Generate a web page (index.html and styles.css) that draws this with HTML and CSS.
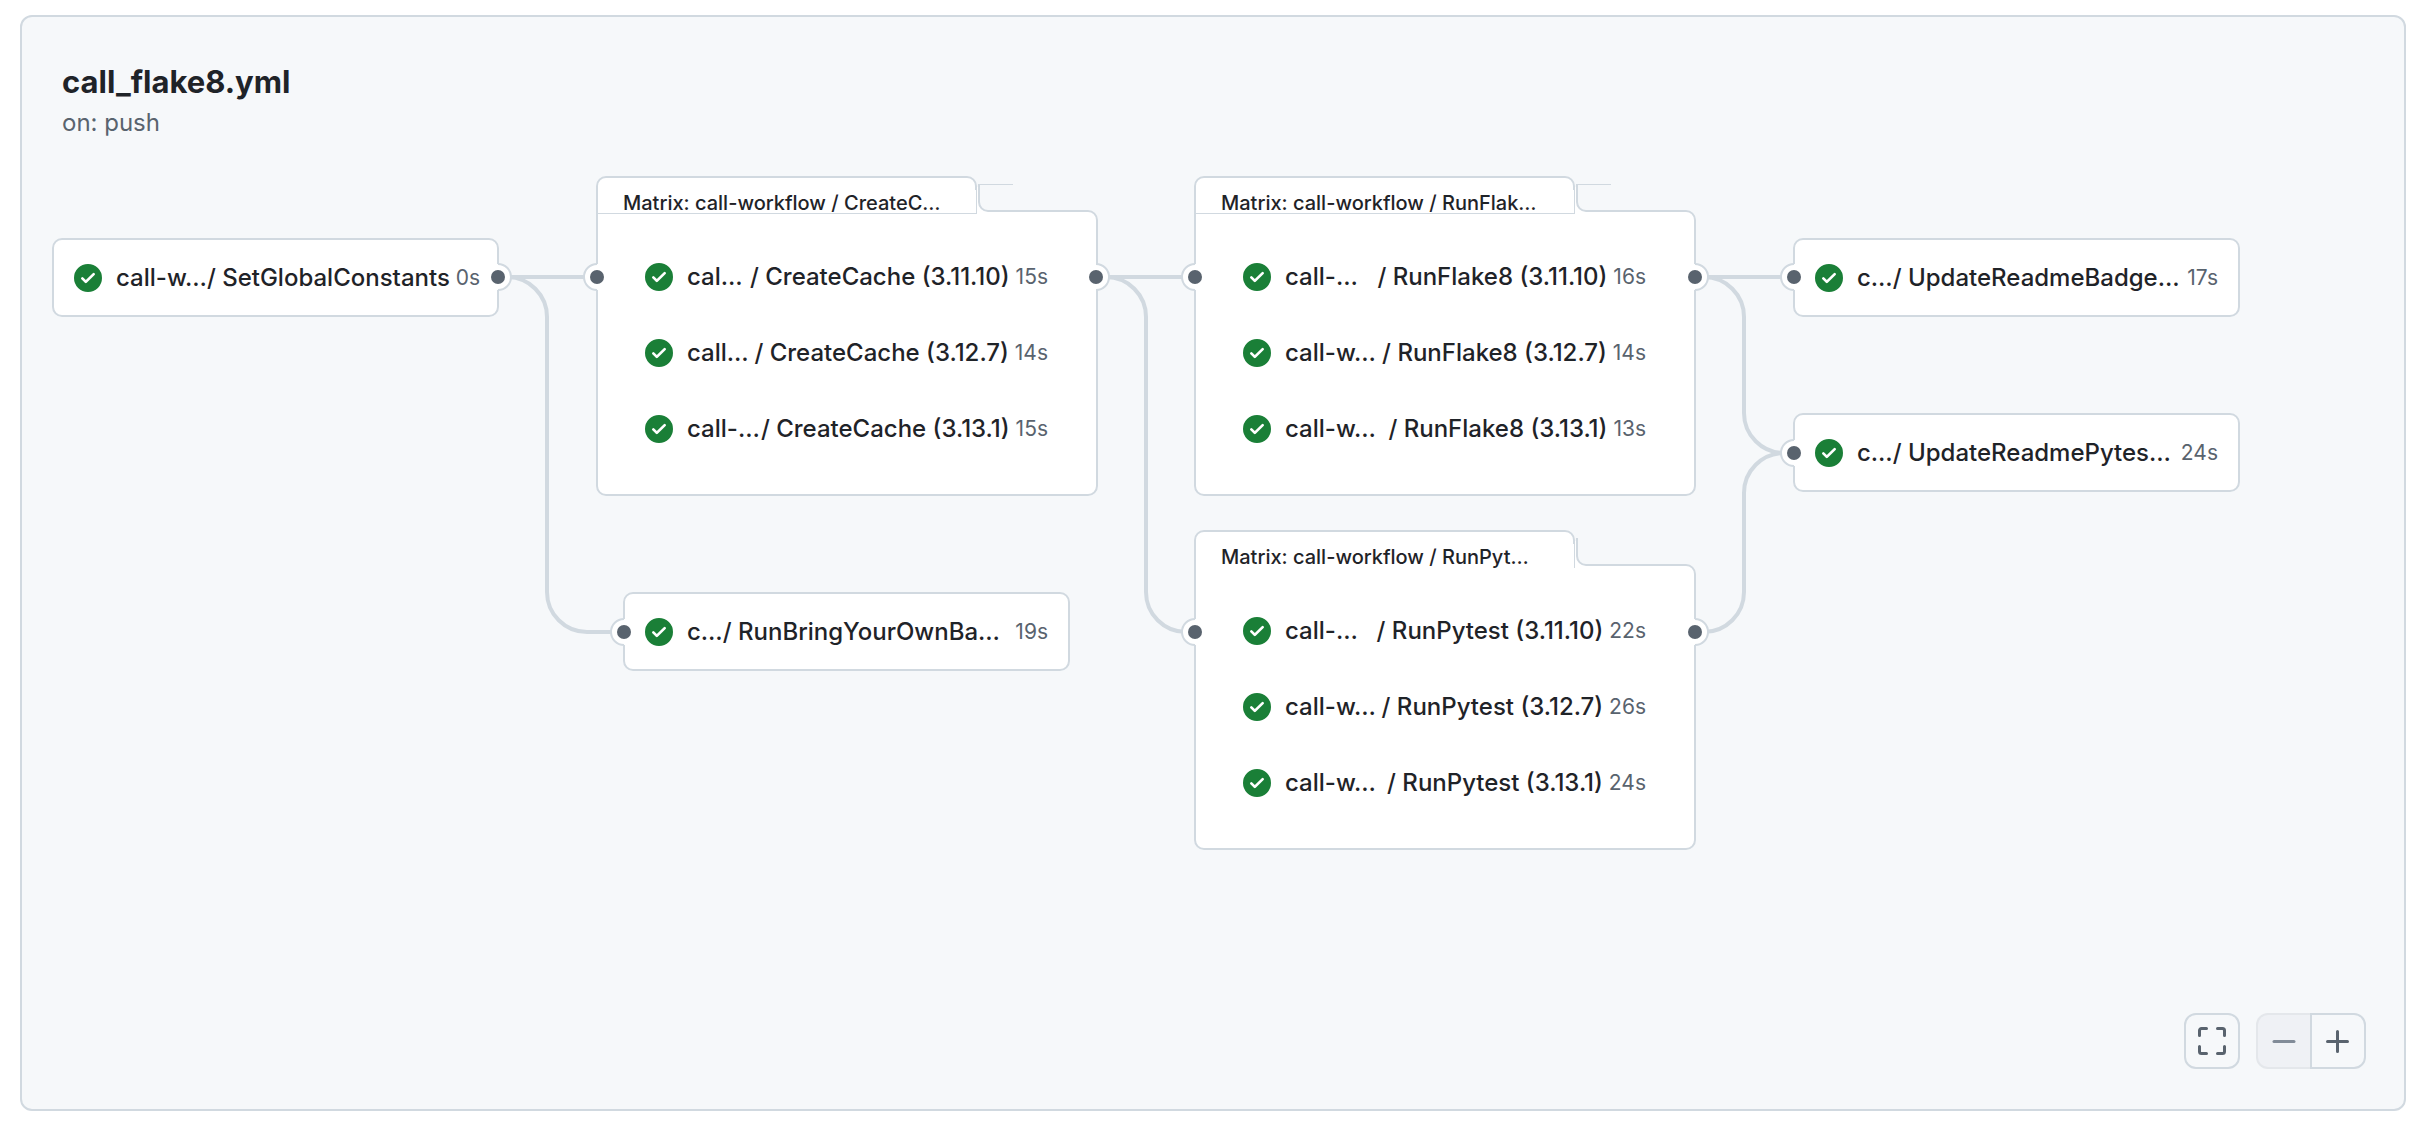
FILE: index.html
```html
<!DOCTYPE html>
<html lang="en">
<head>
<meta charset="utf-8">
<title>call_flake8.yml</title>
<link rel="stylesheet" href="styles.css">
</head>
<body>
<svg class="defs" aria-hidden="true">
  <symbol id="check" viewBox="0 0 16 16"><path d="M8 16A8 8 0 1 1 8 0a8 8 0 0 1 0 16Zm3.78-9.72a.751.751 0 0 0-.018-1.042.751.751 0 0 0-1.042-.018L6.75 9.19 5.28 7.72a.751.751 0 0 0-1.042.018.751.751 0 0 0-.018 1.042l2 2a.75.75 0 0 0 1.06 0Z"/></symbol>
  <symbol id="folder" viewBox="0 0 502 320">
    <path class="fill" d="M1 310V10a9 9 0 0 1 9-9H371a9 9 0 0 1 9 9L383 12V26a9 9 0 0 0 9 9H492a9 9 0 0 1 9 9V310a9 9 0 0 1-9 9H10a9 9 0 0 1-9-9Z"/>
    <path class="edge" d="M383 8V26a9 9 0 0 0 9 9H492a9 9 0 0 1 9 9V310a9 9 0 0 1-9 9H10a9 9 0 0 1-9-9V10a9 9 0 0 1 9-9H371a9 9 0 0 1 9 9V14"/>
    <path class="hair" d="M380.500 14V38"/>
  </symbol>
  <g id="port-out"><circle class="socket" r="13"/><path class="edge" d="M0-13A13 13 0 0 1 0 13"/><circle class="dot" r="7"/></g>
  <g id="port-in"><circle class="socket" r="13"/><path class="edge" d="M0-13A13 13 0 0 0 0 13"/><circle class="dot" r="7"/></g>
</svg>

<main class="panel">
  <header class="head">
    <h1 class="title">call_flake8.yml</h1>
    <p class="trigger">on: push</p>
  </header>

  <section class="canvas" aria-label="Workflow graph">
    <svg class="layer" aria-hidden="true">
      <g class="links">
        <path d="M476 138H574"/>
        <path d="M476 138H485a40 40 0 0 1 40 40V453a40 40 0 0 0 40 40H601"/>
        <path d="M1074 138H1172"/>
        <path d="M1074 138H1084a40 40 0 0 1 40 40V453a40 40 0 0 0 40 40H1172"/>
        <path d="M1673 138H1771"/>
        <path d="M1673 138H1682a40 40 0 0 1 40 40V274a40 40 0 0 0 40 40H1771"/>
        <path d="M1673 493H1682a40 40 0 0 0 40-40V354a40 40 0 0 1 40-40H1771"/>
      </g>
    </svg>

    <a class="job card n-constants" href="#"><svg class="ok"><use href="#check"/></svg><span class="name"><span class="caller">call-w…</span><span>/ SetGlobalConstants</span></span><span class="time">0s</span></a>

    <article class="matrix n-cache">
      <svg class="outline"><use href="#folder"/><path class="hair" d="M2 37.500H380M384 8.500H417"/></svg>
      <h2 class="tab">Matrix: call-workflow / CreateC…</h2>
      <div class="jobs">
        <a class="job" href="#"><svg class="ok"><use href="#check"/></svg><span class="name"><span class="caller">cal…</span><span>/ CreateCache (3.11.10)</span></span><span class="time">15s</span></a>
        <a class="job" href="#"><svg class="ok"><use href="#check"/></svg><span class="name"><span class="caller">call…</span><span>/ CreateCache (3.12.7)</span></span><span class="time">14s</span></a>
        <a class="job" href="#"><svg class="ok"><use href="#check"/></svg><span class="name"><span class="caller">call-…</span><span>/ CreateCache (3.13.1)</span></span><span class="time">15s</span></a>
      </div>
    </article>

    <a class="job card clipped n-badges" href="#"><svg class="ok"><use href="#check"/></svg><span class="name"><span class="caller">c…</span><span>/ RunBringYourOwnBa…</span></span><span class="time">19s</span></a>

    <article class="matrix n-flake">
      <svg class="outline"><use href="#folder"/><path class="hair" d="M2 37.500H380M384 8.500H417"/></svg>
      <h2 class="tab">Matrix: call-workflow / RunFlak…</h2>
      <div class="jobs">
        <a class="job" href="#"><svg class="ok"><use href="#check"/></svg><span class="name"><span class="caller">call-…</span><span>/ RunFlake8 (3.11.10)</span></span><span class="time">16s</span></a>
        <a class="job" href="#"><svg class="ok"><use href="#check"/></svg><span class="name"><span class="caller">call-w…</span><span>/ RunFlake8 (3.12.7)</span></span><span class="time">14s</span></a>
        <a class="job" href="#"><svg class="ok"><use href="#check"/></svg><span class="name"><span class="caller">call-w…</span><span>/ RunFlake8 (3.13.1)</span></span><span class="time">13s</span></a>
      </div>
    </article>

    <article class="matrix n-pytest">
      <svg class="outline"><use href="#folder"/></svg>
      <h2 class="tab">Matrix: call-workflow / RunPyt…</h2>
      <div class="jobs">
        <a class="job" href="#"><svg class="ok"><use href="#check"/></svg><span class="name"><span class="caller">call-…</span><span>/ RunPytest (3.11.10)</span></span><span class="time">22s</span></a>
        <a class="job" href="#"><svg class="ok"><use href="#check"/></svg><span class="name"><span class="caller">call-w…</span><span>/ RunPytest (3.12.7)</span></span><span class="time">26s</span></a>
        <a class="job" href="#"><svg class="ok"><use href="#check"/></svg><span class="name"><span class="caller">call-w…</span><span>/ RunPytest (3.13.1)</span></span><span class="time">24s</span></a>
      </div>
    </article>

    <a class="job card clipped n-readme" href="#"><svg class="ok"><use href="#check"/></svg><span class="name"><span class="caller">c…</span><span>/ UpdateReadmeBadge…</span></span><span class="time">17s</span></a>
    <a class="job card clipped n-readme-pytest" href="#"><svg class="ok"><use href="#check"/></svg><span class="name"><span class="caller">c…</span><span>/ UpdateReadmePytes…</span></span><span class="time">24s</span></a>

    <svg class="layer" aria-hidden="true">
      <use href="#port-out" x="476" y="138"/>
      <use href="#port-in" x="575" y="138"/>
      <use href="#port-out" x="1074" y="138"/>
      <use href="#port-in" x="602" y="493"/>
      <use href="#port-in" x="1173" y="138"/>
      <use href="#port-out" x="1673" y="138"/>
      <use href="#port-in" x="1173" y="493"/>
      <use href="#port-out" x="1673" y="493"/>
      <use href="#port-in" x="1772" y="138"/>
      <use href="#port-in" x="1772" y="314"/>
    </svg>
  </section>

  <footer class="controls">
    <button class="ctl" type="button" aria-label="Full screen"><svg class="glyph" viewBox="0 0 28 28"><path d="M1.500 8.500V3.500a2 2 0 0 1 2-2H8.500M19.500 1.500H24.500a2 2 0 0 1 2 2V8.500M26.500 19.500V24.500a2 2 0 0 1-2 2H19.500M8.500 26.500H3.500a2 2 0 0 1-2-2V19.500"/></svg></button>
    <div class="zoom">
      <button class="ctl" type="button" aria-label="Zoom out" disabled><svg class="glyph" viewBox="0 0 28 28"><path d="M4 14.500H24"/></svg></button>
      <button class="ctl" type="button" aria-label="Zoom in"><svg class="glyph" viewBox="0 0 28 28"><path d="M3.500 14.500H23.500M13.500 4.500V24.500"/></svg></button>
    </div>
  </footer>
</main>
</body>
</html>
```
FILE: styles.css
```css
* { box-sizing: border-box; }

body {
  margin: 0;
  padding: 15px 20px 17px;
  background: #fff;
  color: #1f2328;
  font-family: Inter, "Liberation Sans", sans-serif;
}

.defs { position: absolute; width: 0; height: 0; }

.panel {
  display: flex;
  flex-direction: column;
  min-height: calc(100vh - 32px);
  border: 2px solid #d1d9e0;
  border-radius: 12px;
  background: #f6f8fa;
}

.head { padding: 45px 40px 0; }
.title { margin: 0; font-size: 31px; line-height: 40px; font-weight: 700; }
.trigger { margin: 4px 0 0; font-size: 24px; line-height: 33px; color: #59636e; }

/* Graph */
.canvas { position: relative; flex: 1; min-height: 740px; }
.layer { position: absolute; inset: 0; width: 100%; height: 100%; pointer-events: none; }
.links path { fill: none; stroke: #d1d9e0; stroke-width: 4px; }
.socket, .fill { fill: #fff; }
.edge { fill: none; stroke: #d1d9e0; stroke-width: 2px; }
.hair { fill: none; stroke: #d1d9e0; stroke-width: 1px; }
.dot { fill: #59636e; }

.job {
  display: flex;
  align-items: center;
  height: 76px;
  color: inherit;
  font-size: 24px;
  line-height: 32px;
  font-weight: 500;
  text-decoration: none;
  white-space: pre;
}
.ok { flex: none; width: 28px; height: 28px; margin-right: 14px; fill: #1a7f37; }
.name { display: flex; flex: 1; justify-content: space-between; }
.clipped .name { justify-content: flex-start; }
.time { padding-left: 6px; font-size: 21px; font-weight: 400; color: #59636e; }

.card {
  position: absolute;
  width: 447px;
  height: 79px;
  padding: 0 20px;
  border: 2px solid #d1d9e0;
  border-radius: 10px;
  background: #fff;
}

.matrix { position: absolute; width: 502px; height: 320px; }
.outline { position: absolute; inset: 0; width: 502px; height: 320px; }
.tab {
  position: relative;
  margin: 0;
  padding: 12px 27px 0;
  font-size: 20px;
  line-height: 30px;
  font-weight: 500;
  white-space: nowrap;
}
.jobs { position: relative; padding: 21px 50px 0 49px; }

.n-constants { left: 30px; top: 99px; }
.n-cache { left: 574px; top: 37px; }
.n-badges { left: 601px; top: 453px; }
.n-flake { left: 1172px; top: 37px; }
.n-pytest { left: 1172px; top: 391px; }
.n-readme { left: 1771px; top: 99px; }
.n-readme-pytest { left: 1771px; top: 274px; }

/* Zoom controls */
.controls { display: flex; justify-content: flex-end; gap: 16px; padding: 0 38px 40px; }
.zoom { display: flex; }
.ctl {
  display: grid;
  place-items: center;
  width: 56px;
  height: 56px;
  padding: 0;
  border: 2px solid #d1d9e0;
  border-radius: 12px;
  background: #f6f8fa;
}
.zoom .ctl:first-child { width: 54px; border-right: 0; border-radius: 12px 0 0 12px; }
.zoom .ctl:last-child { border-radius: 0 12px 12px 0; }
.ctl:disabled { border-color: #e4e7eb; background: #eff1f5; }
.glyph { width: 28px; height: 28px; fill: none; stroke: #59636e; stroke-width: 3px; stroke-linecap: round; }
.ctl:disabled .glyph { stroke: #818b98; }
```
